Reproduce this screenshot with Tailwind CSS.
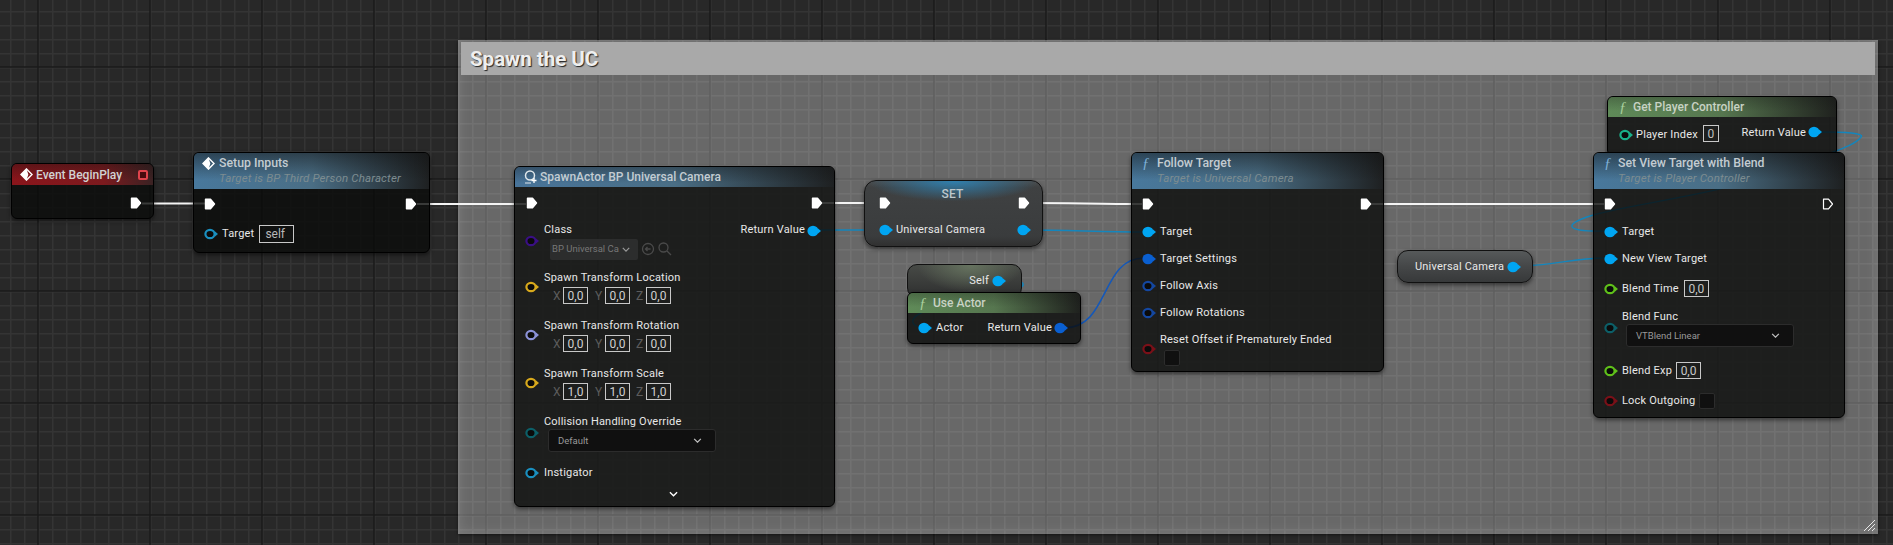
<!DOCTYPE html>
<html lang="en">
<head>
<meta charset="UTF-8">
<title>Blueprint graph</title>
<script src="https://cdn.jsdelivr.net/npm/@tailwindcss/browser@4"></script>
</head>
<body class="bg-[#282828]">
<div class="relative w-[1893px] h-[545px] overflow-hidden bg-[#282828] font-['Roboto',sans-serif] text-[11px] leading-4 tracking-[0.2px] text-[#e8e8e8]">

  <!-- shared pin shapes -->
  <svg width="0" height="0" class="absolute">
    <defs>
      <symbol id="exec" viewBox="0 0 12 12"><path d="M1.5 1.2h5l4 4.8-4 4.8h-5z" fill="currentColor" stroke="currentColor" stroke-width="1.4" stroke-linejoin="round"/></symbol>
      <symbol id="exec-open" viewBox="0 0 12 12"><path d="M1.5 1.2h5l4 4.8-4 4.8h-5z" fill="none" stroke="currentColor" stroke-width="1.2" stroke-linejoin="round"/></symbol>
      <symbol id="pin" viewBox="0 0 15 12"><ellipse cx="6" cy="6" rx="5.600" ry="5.200" fill="currentColor"/><path d="M11 3.500l3 2.500-3 2.500z" fill="currentColor"/></symbol>
      <symbol id="pin-open" viewBox="0 0 15 12"><ellipse cx="6" cy="6" rx="4.600" ry="4.200" fill="#0b0b0b" stroke="currentColor" stroke-width="2.200"/><path d="M11 3.500l3 2.500-3 2.500z" fill="currentColor"/></symbol>
      <symbol id="event" viewBox="0 0 14 14"><path d="M7 1l6 6-6 6-6-6z" fill="none" stroke="#fff" stroke-width="1.6"/><path d="M7 1L1 7l6 6 2-6z" fill="#fff"/></symbol>
      <symbol id="chev" viewBox="0 0 10 6"><path d="M1 1l4 4 4-4" fill="none" stroke="currentColor" stroke-width="1.5"/></symbol>
    </defs>
  </svg>

  <!-- graph grid -->
  <svg class="absolute inset-0" width="1893" height="545">
    <defs>
      <pattern id="fine" x="38" y="67" width="14" height="14" patternUnits="userSpaceOnUse">
        <path d="M0 0h14M0 0v14" stroke="#343434" stroke-width="3"/>
      </pattern>
      <pattern id="major" x="37" y="66" width="112" height="112" patternUnits="userSpaceOnUse">
        <path d="M0 1h112M1 0v112" stroke="#191919" stroke-width="1.500"/>
      </pattern>
    </defs>
    <rect width="1893" height="545" fill="url(#fine)"/>
    <rect width="1893" height="545" fill="url(#major)"/>
  </svg>

  <!-- comment box -->
  <div class="absolute left-[458px] top-[40px] w-[1420px] h-[494px] bg-white/30 shadow-[inset_0_0_14px_rgba(255,255,255,0.16),0_1px_3px_rgba(0,0,0,0.5)]">
    <div class="mx-[3px] mt-[2px] h-[33px] bg-[#a9a9a9] pl-[9px] flex items-center font-bold text-[20.500px] tracking-normal text-[#efefef] [text-shadow:1px_1px_1px_#222]">Spawn the UC</div>
    <svg class="absolute right-[2px] bottom-[2px]" width="13" height="13" viewBox="0 0 13 13"><path d="M1 12L12 1M5 12l7-7M9 12l3-3" stroke="#e8e8e8" stroke-width="1"/></svg>
  </div>

  <!-- wires -->
  <svg class="absolute inset-0" width="1893" height="545" fill="none">
    <g stroke="#f4f4f4" stroke-width="2.200">
      <path d="M142 203.500H206"/>
      <path d="M417 204H526"/>
      <path d="M822 203H879"/>
      <path d="M1030 203C1070 203 1100 204 1142 204"/>
      <path d="M1371 204H1604"/>
    </g>
    <g stroke="#1386bd" stroke-width="1.400">
      <path d="M818 230H878"/>
      <path d="M1026 230C1070 230 1100 232 1144 232"/>
      <path d="M1516 266C1555 266 1570 258 1606 258"/>
      <path d="M1004 280C1030 280 1028 288 1008 291C960 298 890 315 920 328"/>
      <path d="M1820 132C1845 132 1865 133 1861 137C1855 145 1838 150 1825 155C1760 190 1620 205 1590 216C1565 224 1562 232 1606 231"/>
    </g>
    <path d="M1064 328C1110 328 1100 258 1144 258" stroke="#1558b8" stroke-width="1.600"/>
  </svg>

  <!-- Event BeginPlay -->
  <div class="absolute left-[11px] top-[163px] w-[143px] h-[56px] rounded-md border border-black bg-[#0a0b0a]/80 shadow-[0_2px_4px_rgba(0,0,0,0.5)] overflow-hidden">
    <div class="h-[21px] flex items-center pl-[8px] pr-[5px] bg-[linear-gradient(180deg,rgba(16,16,16,0.35),transparent_75%),linear-gradient(90deg,#8a151b,#7c1a1e_65%,#3a2223)] font-medium text-[12px] tracking-normal text-[#d2d2d2]">
      <svg class="w-[13px] h-[13px] mr-[3px]"><use href="#event"/></svg>
      <span>Event BeginPlay</span>
      <span class="ml-auto w-[10px] h-[10px] rounded-[2px] border-2 border-[#e0434c] bg-[#4a0a0e]"></span>
    </div>
    <div class="flex justify-end pt-[12px] pr-[11px] text-white"><svg class="w-[12px] h-[12px]"><use href="#exec"/></svg></div>
  </div>

  <!-- Setup Inputs -->
  <div class="absolute left-[193px] top-[152px] w-[237px] h-[101px] rounded-md border border-black bg-[#0a0b0a]/80 shadow-[0_2px_4px_rgba(0,0,0,0.5)] overflow-hidden">
    <div class="h-[36px] pl-[8px] pt-[2px] bg-[linear-gradient(180deg,rgba(16,16,16,0.5),transparent_75%),linear-gradient(90deg,#48789c,#4a6e85_50%,#1e2021)]">
      <div class="flex items-center font-medium text-[12.300px] tracking-normal text-[#c3ccd2]">
        <svg class="w-[13px] h-[13px] mr-[4px]"><use href="#event"/></svg>
        <span>Setup Inputs</span>
      </div>
      <div class="pl-[17px] italic text-[11.500px] tracking-[0.15px] text-[#7d8c90] leading-[15px]">Target is BP Third Person Character</div>
    </div>
    <div class="flex justify-between pl-[10px] pr-[12px] pt-[9px] text-white">
      <svg class="w-[12px] h-[12px]"><use href="#exec"/></svg>
      <svg class="w-[12px] h-[12px]"><use href="#exec"/></svg>
    </div>
    <div class="flex items-center pl-[10px] mt-[15px]">
      <svg class="w-[15px] h-[12px] mr-[3px] text-[#1a8fbf]"><use href="#pin-open"/></svg>
      <span>Target</span>
      <span class="ml-[5px] w-[35px] h-[18px] border border-[#c8c8c8] pl-[5px] text-[12px] tracking-normal text-[#b8b8b8]">self</span>
    </div>
  </div>

  <!-- SpawnActor -->
  <div class="absolute left-[514px] top-[166px] w-[321px] h-[341px] rounded-md border border-black bg-[#0a0b0a]/80 shadow-[0_2px_4px_rgba(0,0,0,0.5)] overflow-hidden">
    <div class="h-[20px] flex items-center pl-[8px] bg-[linear-gradient(180deg,rgba(16,16,16,0.35),transparent_80%),linear-gradient(90deg,#48749a,#4a6e85_50%,#1e2021)] font-medium text-[12px] tracking-normal text-[#c3ccd2]">
      <svg class="mr-[3px]" width="14" height="14" viewBox="0 0 14 14" fill="none"><circle cx="7" cy="5.500" r="4.500" stroke="#dfe6ea" stroke-width="1.500"/><path d="M2 13h6" stroke="#dfe6ea" stroke-width="1.200"/><path d="M11 8v5M8.500 10.500h5" stroke="#fff" stroke-width="1.300"/></svg>
      <span>SpawnActor BP Universal Camera</span>
    </div>
    <div class="flex justify-between pl-[11px] pr-[11px] pt-[10px] h-[35px] text-white">
      <svg class="w-[12px] h-[12px]"><use href="#exec"/></svg>
      <svg class="w-[12px] h-[12px]"><use href="#exec"/></svg>
    </div>
    <div class="flex flex-col pl-[10px] pr-[12px]">
      <div class="flex items-center justify-between h-[37px]">
        <div class="flex items-center">
          <svg class="w-[15px] h-[12px] mr-[4px] text-[#3a0f85]"><use href="#pin-open"/></svg>
          <div>
            <div>Class</div>
            <div class="flex items-center mt-[1px]">
              <div class="ml-[6px] w-[88px] h-[21px] rounded-[2px] bg-[#2c2d2d] flex items-center pl-[2px] text-[9.500px] tracking-normal text-[#777]">
                <span class="w-[66px] whitespace-nowrap">BP Universal Ca</span>
                <svg class="w-[8px] h-[5px] ml-[4px] text-[#9a9a9a]"><use href="#chev"/></svg>
              </div>
              <svg class="ml-[3px]" width="36" height="14" viewBox="0 0 36 14" fill="none" stroke="#4a4a4a" stroke-width="1.300"><circle cx="7" cy="7" r="5.500"/><path d="M9.500 7H4.500M6.500 5L4.500 7l2 2"/><circle cx="22.500" cy="5.500" r="4.500"/><path d="M26 9l4 4"/></svg>
            </div>
          </div>
        </div>
        <div class="flex items-center self-start">
          <span class="mr-[2px]">Return Value</span>
          <svg class="w-[15px] h-[12px] mt-[1px] text-[#00a5f2]"><use href="#pin"/></svg>
        </div>
      </div>

      <div class="flex items-center h-[34px] mt-[11px]">
        <svg class="w-[15px] h-[12px] mr-[4px] text-[#d8a91c]"><use href="#pin-open"/></svg>
        <div>
          <div class="h-[17px]">Spawn Transform Location</div>
          <div class="flex items-center pl-[9px] text-[12px] tracking-normal text-[#5c5c5c]">
            <span class="w-[10px]">X</span><span class="w-[25px] h-[17px] border border-[#c8c8c8] text-center text-[#d0d0d0]">0,0</span>
            <span class="ml-[7px] w-[10px]">Y</span><span class="w-[25px] h-[17px] border border-[#c8c8c8] text-center text-[#d0d0d0]">0,0</span>
            <span class="ml-[6px] w-[10px]">Z</span><span class="w-[25px] h-[17px] border border-[#c8c8c8] text-center text-[#d0d0d0]">0,0</span>
          </div>
        </div>
      </div>

      <div class="flex items-center h-[34px] mt-[14px]">
        <svg class="w-[15px] h-[12px] mr-[4px] text-[#8b92d8]"><use href="#pin-open"/></svg>
        <div>
          <div class="h-[17px]">Spawn Transform Rotation</div>
          <div class="flex items-center pl-[9px] text-[12px] tracking-normal text-[#5c5c5c]">
            <span class="w-[10px]">X</span><span class="w-[25px] h-[17px] border border-[#c8c8c8] text-center text-[#d0d0d0]">0,0</span>
            <span class="ml-[7px] w-[10px]">Y</span><span class="w-[25px] h-[17px] border border-[#c8c8c8] text-center text-[#d0d0d0]">0,0</span>
            <span class="ml-[6px] w-[10px]">Z</span><span class="w-[25px] h-[17px] border border-[#c8c8c8] text-center text-[#d0d0d0]">0,0</span>
          </div>
        </div>
      </div>

      <div class="flex items-center h-[34px] mt-[14px]">
        <svg class="w-[15px] h-[12px] mr-[4px] text-[#d8a91c]"><use href="#pin-open"/></svg>
        <div>
          <div class="h-[17px]">Spawn Transform Scale</div>
          <div class="flex items-center pl-[9px] text-[12px] tracking-normal text-[#5c5c5c]">
            <span class="w-[10px]">X</span><span class="w-[25px] h-[17px] border border-[#c8c8c8] text-center text-[#d0d0d0]">1,0</span>
            <span class="ml-[7px] w-[10px]">Y</span><span class="w-[25px] h-[17px] border border-[#c8c8c8] text-center text-[#d0d0d0]">1,0</span>
            <span class="ml-[6px] w-[10px]">Z</span><span class="w-[25px] h-[17px] border border-[#c8c8c8] text-center text-[#d0d0d0]">1,0</span>
          </div>
        </div>
      </div>

      <div class="flex items-center h-[38px] mt-[14px]">
        <svg class="w-[15px] h-[12px] mr-[4px] text-[#0c5f68]"><use href="#pin-open"/></svg>
        <div>
          <div class="h-[15px]">Collision Handling Override</div>
          <div class="ml-[4px] w-[168px] h-[23px] rounded-[3px] border border-[#2c2c2c] bg-[#101010] flex items-center justify-between pl-[9px] pr-[13px] text-[9.500px] tracking-normal text-[#999]">
            <span>Default</span>
            <svg class="w-[9px] h-[5px] text-[#c0c0c0]"><use href="#chev"/></svg>
          </div>
        </div>
      </div>

      <div class="flex items-center h-[16px] mt-[13px]">
        <svg class="w-[15px] h-[12px] mr-[4px] text-[#1a8fbf]"><use href="#pin-open"/></svg>
        <span>Instigator</span>
      </div>
      <div class="flex justify-center mt-[10px] text-white"><svg class="w-[9px] h-[6px]"><use href="#chev"/></svg></div>
    </div>
  </div>

  <!-- SET -->
  <div class="absolute left-[864px] top-[180px] w-[179px] h-[67px] rounded-[12px] border border-[#111] bg-[linear-gradient(180deg,#4a4c4d,#3f4142_10%,#3a3c3d_85%,#303030)] shadow-[0_2px_4px_rgba(0,0,0,0.5)] overflow-hidden">
    <div class="h-[21px] pt-[5px] text-center font-medium text-[12px] text-[#bfc8cc] bg-[radial-gradient(ellipse_at_50%_0%,#2f7fae,transparent_68%)] pr-[2px]">SET</div>
    <div class="flex justify-between items-center pl-[14px] pr-[12px] text-white -mt-[5px]">
      <svg class="w-[12px] h-[12px]"><use href="#exec"/></svg>
      <svg class="w-[12px] h-[12px]"><use href="#exec"/></svg>
    </div>
    <div class="flex items-center pl-[14px] pr-[10px] mt-[13px]">
      <svg class="w-[15px] h-[12px] text-[#00a5f2] mr-[2px]"><use href="#pin"/></svg>
      <span>Universal Camera</span>
      <svg class="ml-auto w-[15px] h-[12px] text-[#00a5f2]"><use href="#pin"/></svg>
    </div>
  </div>

  <!-- Self -->
  <div class="absolute left-[907px] top-[264px] w-[115px] h-[34px] rounded-[10px] border border-[#111] bg-[radial-gradient(ellipse_at_55%_0%,#66735f,transparent_60%),linear-gradient(180deg,#474a46,#3b3d3b_50%,#2e2f2f)] flex justify-end items-start pt-[8px] pr-[14px]">
    <span class="mr-[3px]">Self</span>
    <svg class="w-[15px] h-[12px] mt-[2px] text-[#00a5f2]"><use href="#pin"/></svg>
  </div>

  <!-- Use Actor -->
  <div class="absolute left-[907px] top-[292px] w-[174px] h-[52px] rounded-md border border-black bg-[#0a0b0a]/80 shadow-[0_2px_4px_rgba(0,0,0,0.5)] overflow-hidden">
    <div class="h-[20px] flex items-center pl-[11px] bg-[linear-gradient(180deg,rgba(16,16,16,0.25),transparent_70%),linear-gradient(90deg,#5f8a58,#56764f_50%,#1f211e)] font-medium text-[12px] tracking-normal text-[#c8d2c4]">
      <span class="font-['Liberation_Serif',serif] italic text-[15px] text-[#a9cf9e] w-[14px]">ƒ</span>
      <span>Use Actor</span>
    </div>
    <div class="flex items-center pl-[10px] pr-[11px] mt-[7px]">
      <svg class="w-[15px] h-[12px] mr-[3px] text-[#00a5f2]"><use href="#pin"/></svg>
      <span>Actor</span>
      <span class="ml-auto mr-[2px]">Return Value</span>
      <svg class="w-[15px] h-[12px] text-[#0a5fd0]"><use href="#pin"/></svg>
    </div>
  </div>

  <!-- Follow Target -->
  <div class="absolute left-[1131px] top-[152px] w-[253px] h-[220px] rounded-md border border-black bg-[#0a0b0a]/80 shadow-[0_2px_4px_rgba(0,0,0,0.5)] overflow-hidden">
    <div class="h-[36px] pl-[10px] pt-[2px] bg-[linear-gradient(180deg,rgba(16,16,16,0.5),transparent_75%),linear-gradient(90deg,#48789c,#4a6e85_50%,#1e2021)]">
      <div class="flex items-center font-medium text-[12.300px] tracking-normal text-[#c3ccd2]">
        <span class="font-['Liberation_Serif',serif] italic text-[15px] text-[#7db0d8] w-[15px]">ƒ</span>
        <span>Follow Target</span>
      </div>
      <div class="pl-[15px] italic text-[11.500px] tracking-[0.15px] text-[#7d8c90] leading-[15px]">Target is Universal Camera</div>
    </div>
    <div class="flex justify-between pl-[10px] pr-[11px] pt-[9px] h-[35px] text-white">
      <svg class="w-[12px] h-[12px]"><use href="#exec"/></svg>
      <svg class="w-[12px] h-[12px]"><use href="#exec"/></svg>
    </div>
    <div class="flex flex-col gap-[11px] pl-[10px]">
      <div class="flex items-center h-[16px]"><svg class="w-[15px] h-[12px] mr-[3px] text-[#00a5f2]"><use href="#pin"/></svg><span>Target</span></div>
      <div class="flex items-center h-[16px]"><svg class="w-[15px] h-[12px] mr-[3px] text-[#0a5fd0]"><use href="#pin"/></svg><span>Target Settings</span></div>
      <div class="flex items-center h-[16px]"><svg class="w-[15px] h-[12px] mr-[3px] text-[#1447a0]"><use href="#pin-open"/></svg><span>Follow Axis</span></div>
      <div class="flex items-center h-[16px]"><svg class="w-[15px] h-[12px] mr-[3px] text-[#1447a0]"><use href="#pin-open"/></svg><span>Follow Rotations</span></div>
      <div class="flex items-center">
        <svg class="w-[15px] h-[12px] mr-[3px] text-[#7a1018]"><use href="#pin-open"/></svg>
        <div>
          <div>Reset Offset if Prematurely Ended</div>
          <div class="ml-[4px] mt-[2px] w-[16px] h-[16px] rounded-[2px] border border-[#2c2c2c] bg-[#101010]"></div>
        </div>
      </div>
    </div>
  </div>

  <!-- Universal Camera getter -->
  <div class="absolute left-[1397px] top-[250px] w-[136px] h-[33px] rounded-[11px] border border-[#111] bg-[linear-gradient(180deg,#56595a,#454748_50%,#37393a)] shadow-[0_2px_4px_rgba(0,0,0,0.5)] flex items-center pl-[17px]">
    <span class="mr-[3px]">Universal Camera</span>
    <svg class="w-[15px] h-[12px] text-[#00a5f2]"><use href="#pin"/></svg>
  </div>

  <!-- Get Player Controller -->
  <div class="absolute left-[1607px] top-[96px] w-[230px] h-[60px] rounded-md border border-black bg-[#0a0b0a]/80 shadow-[0_2px_4px_rgba(0,0,0,0.5)] overflow-hidden">
    <div class="h-[20px] flex items-center pl-[11px] bg-[linear-gradient(180deg,rgba(16,16,16,0.25),transparent_70%),linear-gradient(90deg,#5f8a58,#56764f_50%,#1f211e)] font-medium text-[12px] tracking-normal text-[#c8d2c4]">
      <span class="font-['Liberation_Serif',serif] italic text-[15px] text-[#a9cf9e] w-[14px]">ƒ</span>
      <span>Get Player Controller</span>
    </div>
    <div class="flex items-start pl-[11px] pr-[13px] mt-[8px]">
      <svg class="w-[15px] h-[12px] mt-[4px] mr-[2px] text-[#19b08a]"><use href="#pin-open"/></svg>
      <span class="mt-[2px]">Player Index</span>
      <span class="ml-[5px] w-[16px] h-[17px] border border-[#c8c8c8] text-center text-[12px] text-[#c0c0c0]">0</span>
      <span class="ml-auto mr-[2px]">Return Value</span>
      <svg class="w-[15px] h-[12px] mt-[1px] text-[#00a5f2]"><use href="#pin"/></svg>
    </div>
  </div>

  <!-- Set View Target with Blend -->
  <div class="absolute left-[1593px] top-[152px] w-[252px] h-[266px] rounded-md border border-black bg-[#0a0b0a]/80 shadow-[0_2px_4px_rgba(0,0,0,0.5)] overflow-hidden">
    <div class="h-[36px] pl-[10px] pt-[2px] bg-[linear-gradient(180deg,rgba(16,16,16,0.5),transparent_75%),linear-gradient(90deg,#48789c,#4a6e85_50%,#1e2021)]">
      <div class="flex items-center font-medium text-[12.300px] tracking-normal text-[#c3ccd2]">
        <span class="font-['Liberation_Serif',serif] italic text-[15px] text-[#7db0d8] w-[14px]">ƒ</span>
        <span>Set View Target with Blend</span>
      </div>
      <div class="pl-[14px] italic text-[11.500px] tracking-[0.15px] text-[#7d8c90] leading-[15px]">Target is Player Controller</div>
    </div>
    <div class="flex justify-between pl-[10px] pr-[10px] pt-[9px] h-[35px] text-white">
      <svg class="w-[12px] h-[12px]"><use href="#exec"/></svg>
      <svg class="w-[12px] h-[12px]"><use href="#exec-open"/></svg>
    </div>
    <div class="flex flex-col pl-[10px]">
      <div class="flex items-center h-[16px]"><svg class="w-[15px] h-[12px] mr-[3px] text-[#00a5f2]"><use href="#pin"/></svg><span>Target</span></div>
      <div class="flex items-center h-[16px] mt-[11px]"><svg class="w-[15px] h-[12px] mr-[3px] text-[#00a5f2]"><use href="#pin"/></svg><span>New View Target</span></div>
      <div class="flex items-center h-[17px] mt-[13px]">
        <svg class="w-[15px] h-[12px] mr-[3px] text-[#5fc01a]"><use href="#pin-open"/></svg><span>Blend Time</span>
        <span class="ml-[5px] w-[25px] h-[17px] border border-[#c8c8c8] text-center text-[12px] tracking-normal text-[#c8c8c8]">0,0</span>
      </div>
      <div class="flex items-center mt-[12px]">
        <svg class="w-[15px] h-[12px] mr-[3px] text-[#0c5f68]"><use href="#pin-open"/></svg>
        <div>
          <div class="h-[15px]">Blend Func</div>
          <div class="ml-[4px] w-[168px] h-[23px] rounded-[3px] border border-[#2c2c2c] bg-[#101010] flex items-center justify-between pl-[9px] pr-[13px] text-[9.500px] tracking-normal text-[#999]">
            <span>VTBlend Linear</span>
            <svg class="w-[9px] h-[5px] text-[#c0c0c0]"><use href="#chev"/></svg>
          </div>
        </div>
      </div>
      <div class="flex items-center h-[17px] mt-[15px]">
        <svg class="w-[15px] h-[12px] mr-[3px] text-[#5fc01a]"><use href="#pin-open"/></svg><span>Blend Exp</span>
        <span class="ml-[4px] w-[25px] h-[17px] border border-[#c8c8c8] text-center text-[12px] tracking-normal text-[#c8c8c8]">0,0</span>
      </div>
      <div class="flex items-center h-[16px] mt-[14px]">
        <svg class="w-[15px] h-[12px] mr-[3px] text-[#7a1018]"><use href="#pin-open"/></svg><span>Lock Outgoing</span>
        <span class="ml-[4px] w-[16px] h-[16px] rounded-[2px] border border-[#2c2c2c] bg-[#101010]"></span>
      </div>
    </div>
  </div>

</div>
</body>
</html>
